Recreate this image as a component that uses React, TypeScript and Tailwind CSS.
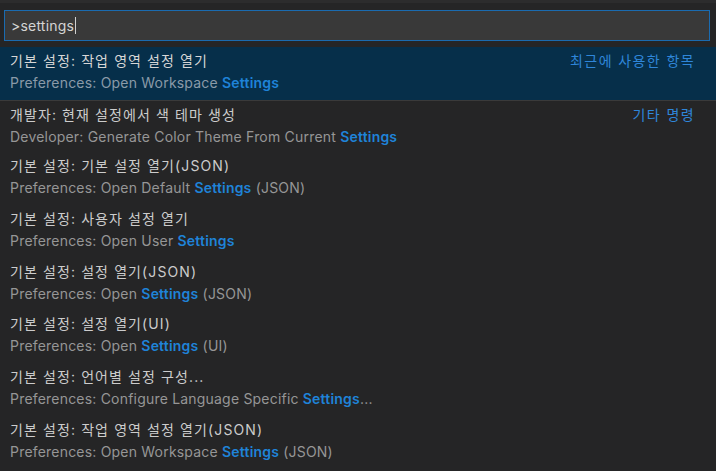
const items = [
  { ko: "기본 설정: 작업 영역 설정 열기", pre: "Preferences: Open Workspace ", post: "", label: "최근에 사용한 항목", selected: true },
  { ko: "개발자: 현재 설정에서 색 테마 생성", pre: "Developer: Generate Color Theme From Current ", post: "", label: "기타 명령", separator: true },
  { ko: "기본 설정: 기본 설정 열기(JSON)", pre: "Preferences: Open Default ", post: " (JSON)" },
  { ko: "기본 설정: 사용자 설정 열기", pre: "Preferences: Open User ", post: "" },
  { ko: "기본 설정: 설정 열기(JSON)", pre: "Preferences: Open ", post: " (JSON)" },
  { ko: "기본 설정: 설정 열기(UI)", pre: "Preferences: Open ", post: " (UI)" },
  { ko: "기본 설정: 언어별 설정 구성...", pre: "Preferences: Configure Language Specific ", post: "..." },
  { ko: "기본 설정: 작업 영역 설정 열기(JSON)", pre: "Preferences: Open Workspace ", post: " (JSON)" },
];

type Item = {
  ko: string;
  pre: string;
  post: string;
  label?: string;
  selected?: boolean;
  separator?: boolean;
};

const Row = ({ item }: { item: Item }) => {
  return (
    <div
      className={
        "relative h-[52.7px] pl-[10px] pr-[21px] pt-[3px] flex " +
        (item.selected ? "bg-[#062f4a]" : "") +
        (item.separator ? " border-t border-[#3a3a3a]" : "")
      }
    >
      <div className="flex-1 min-w-0">
        <div
          className={
            "h-[22px] leading-[22px] text-[14px] tracking-[1.1px] whitespace-pre " +
            (item.selected ? "text-[#d6d6d6]" : "text-[#cccccc]")
          }
        >
          {item.ko}
        </div>
        <div
          className={
            "h-[22px] leading-[22px] text-[14px] tracking-[0.2px] whitespace-pre " +
            (item.selected ? "text-[#8a9aa8]" : "text-[#969696]")
          }
        >
          {item.pre}
          <span className="text-[#1f83d8] font-semibold">Settings</span>
          {item.post}
        </div>
      </div>
      {item.label && (
        <div className="h-[22px] leading-[22px] text-[14px] tracking-[1.4px] text-[#2f86d9]">
          {item.label}
        </div>
      )}
    </div>
  );
};

const App = () => {
  return (
    <div
      className="w-[716px] h-[471px] bg-[#252526] overflow-hidden"
      style={{ fontFamily: 'Inter, "Noto Sans CJK KR", sans-serif' }}
    >
      <div className="h-[3px] bg-[#2c2c2d]" />
      <div className="pt-[7px] pl-[4px] pr-[6px]">
        {/* 입력창 */}
        <div className="h-[31px] bg-[#393939] border border-[#1a6bb0] flex items-center pl-[6px] text-[14px] tracking-[0.2px] text-[#d4d4d4]">
          <span>&gt;settings</span>
          <span className="w-px h-[17px] bg-[#d0d0d0] ml-px" />
        </div>
      </div>
      <div className="mt-[6px]">
        {items.map((item, i) => (
          <Row key={i} item={item} />
        ))}
      </div>
    </div>
  );
};

export default App;
